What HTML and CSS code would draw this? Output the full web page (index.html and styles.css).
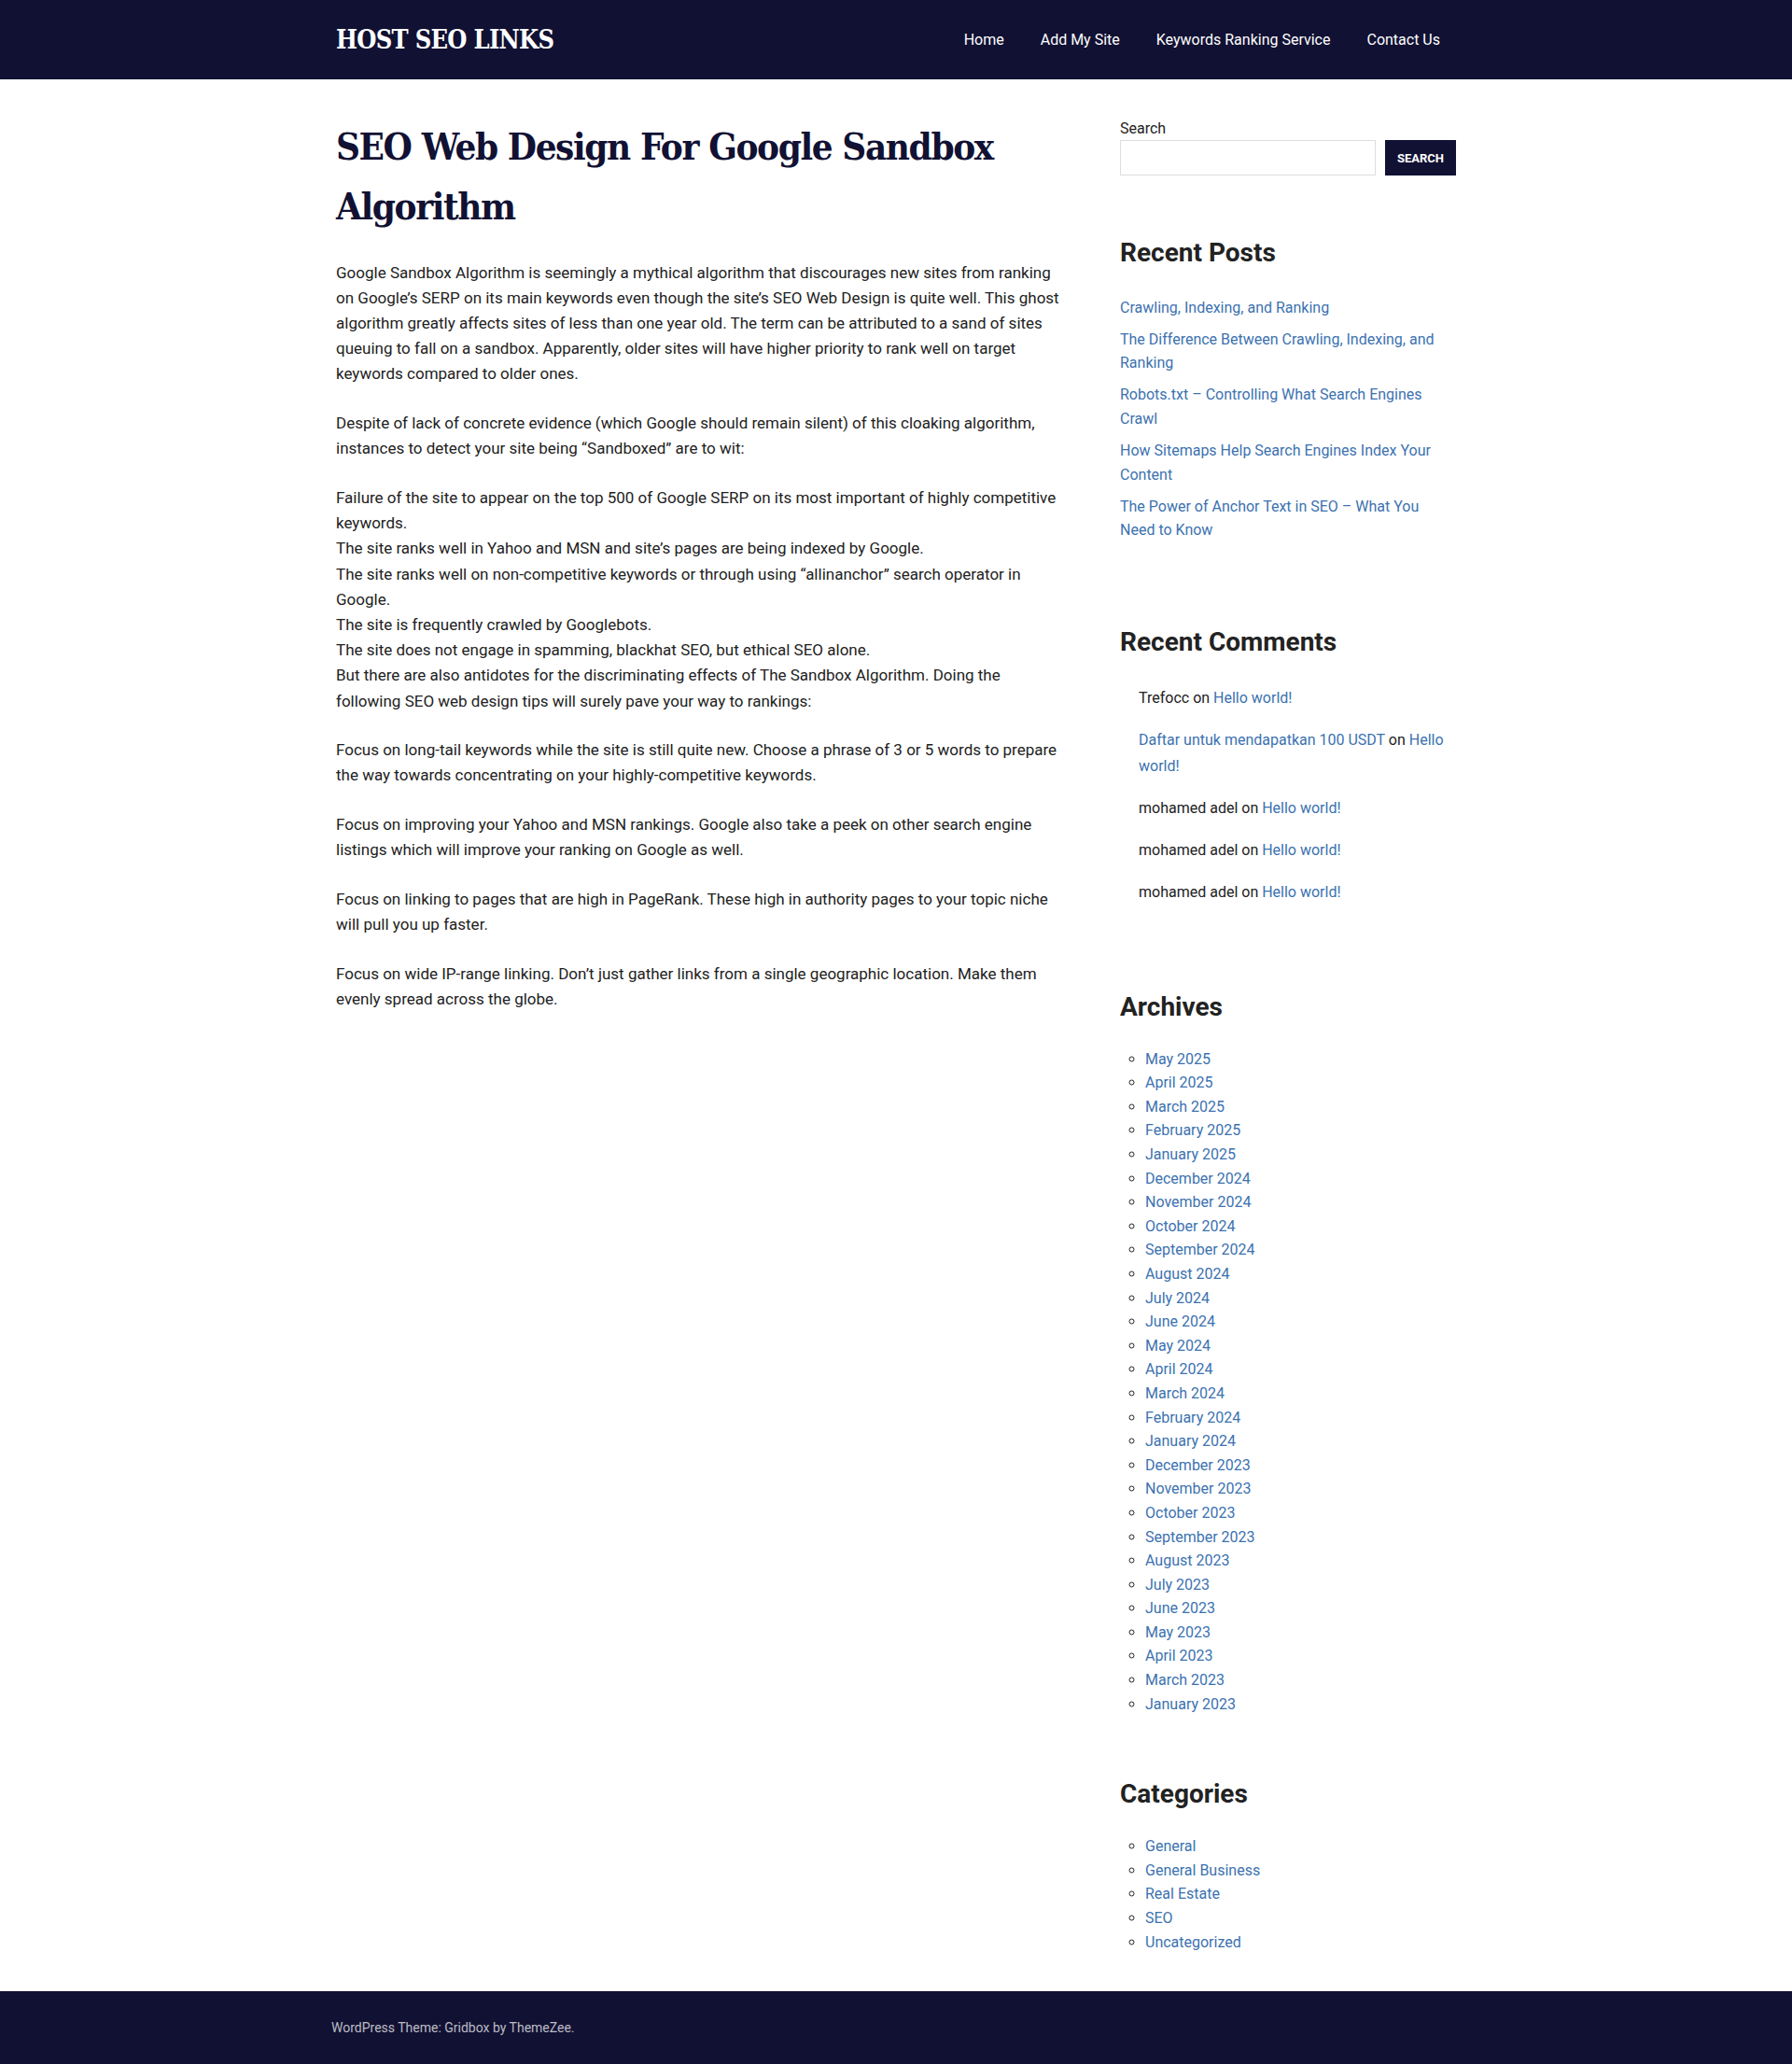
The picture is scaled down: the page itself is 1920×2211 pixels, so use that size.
FILE: index.html
```html
<!DOCTYPE html>
<html lang="en">
<head>
<meta charset="utf-8">
<title>SEO Web Design For Google Sandbox Algorithm – HOST SEO LINKS</title>
<link rel="stylesheet" href="styles.css">
</head>
<body>
<header class="site-header">
  <div class="container header-inner">
    <a class="site-title" href="#">HOST SEO LINKS</a>
    <nav class="main-nav">
      <a href="#">Home</a>
      <a href="#">Add My Site</a>
      <a href="#">Keywords Ranking Service</a>
      <a href="#">Contact Us</a>
    </nav>
  </div>
</header>

<div class="container site-body">
  <main class="content">
    <article class="post">
      <h1 class="entry-title">SEO Web Design For Google Sandbox Algorithm</h1>
      <p>Google Sandbox Algorithm is seemingly a mythical algorithm that discourages new sites from ranking on Google’s SERP on its main keywords even though the site’s SEO Web Design is quite well. This ghost algorithm greatly affects sites of less than one year old. The term can be attributed to a sand of sites queuing to fall on a sandbox. Apparently, older sites will have higher priority to rank well on target keywords compared to older ones.</p>
      <p>Despite of lack of concrete evidence (which Google should remain silent) of this cloaking algorithm, instances to detect your site being “Sandboxed” are to wit:</p>
      <p>Failure of the site to appear on the top 500 of Google SERP on its most important of highly competitive keywords.<br>The site ranks well in Yahoo and MSN and site’s pages are being indexed by Google.<br>The site ranks well on non-competitive keywords or through using “allinanchor” search operator in Google.<br>The site is frequently crawled by Googlebots.<br>The site does not engage in spamming, blackhat SEO, but ethical SEO alone.<br>But there are also antidotes for the discriminating effects of The Sandbox Algorithm. Doing the following SEO web design tips will surely pave your way to rankings:</p>
      <p>Focus on long-tail keywords while the site is still quite new. Choose a phrase of 3 or 5 words to prepare the way towards concentrating on your highly-competitive keywords.</p>
      <p>Focus on improving your Yahoo and MSN rankings. Google also take a peek on other search engine listings which will improve your ranking on Google as well.</p>
      <p>Focus on linking to pages that are high in PageRank. These high in authority pages to your topic niche will pull you up faster.</p>
      <p>Focus on wide IP-range linking. Don’t just gather links from a single geographic location. Make them evenly spread across the globe.</p>
    </article>
  </main>

  <aside class="sidebar">
    <section class="widget widget-search">
      <label class="search-label" for="s">Search</label>
      <form class="search-row">
        <input id="s" class="search-input" type="text">
        <button class="search-button" type="button">Search</button>
      </form>
    </section>

    <section class="widget">
      <h2 class="widget-title">Recent Posts</h2>
      <ul class="posts-list">
        <li><a href="#">Crawling, Indexing, and Ranking</a></li>
        <li><a href="#">The Difference Between Crawling, Indexing, and Ranking</a></li>
        <li><a href="#">Robots.txt – Controlling What Search Engines Crawl</a></li>
        <li><a href="#">How Sitemaps Help Search Engines Index Your Content</a></li>
        <li><a href="#">The Power of Anchor Text in SEO – What You Need to Know</a></li>
      </ul>
    </section>

    <section class="widget">
      <h2 class="widget-title">Recent Comments</h2>
      <ul class="comments-list">
        <li>Trefocc on <a href="#">Hello world!</a></li>
        <li><a href="#">Daftar untuk mendapatkan 100 USDT</a> on <a href="#">Hello world!</a></li>
        <li>mohamed adel on <a href="#">Hello world!</a></li>
        <li>mohamed adel on <a href="#">Hello world!</a></li>
        <li>mohamed adel on <a href="#">Hello world!</a></li>
      </ul>
    </section>

    <section class="widget">
      <h2 class="widget-title">Archives</h2>
      <ul class="circle-list">
        <li><a href="#">May 2025</a></li>
        <li><a href="#">April 2025</a></li>
        <li><a href="#">March 2025</a></li>
        <li><a href="#">February 2025</a></li>
        <li><a href="#">January 2025</a></li>
        <li><a href="#">December 2024</a></li>
        <li><a href="#">November 2024</a></li>
        <li><a href="#">October 2024</a></li>
        <li><a href="#">September 2024</a></li>
        <li><a href="#">August 2024</a></li>
        <li><a href="#">July 2024</a></li>
        <li><a href="#">June 2024</a></li>
        <li><a href="#">May 2024</a></li>
        <li><a href="#">April 2024</a></li>
        <li><a href="#">March 2024</a></li>
        <li><a href="#">February 2024</a></li>
        <li><a href="#">January 2024</a></li>
        <li><a href="#">December 2023</a></li>
        <li><a href="#">November 2023</a></li>
        <li><a href="#">October 2023</a></li>
        <li><a href="#">September 2023</a></li>
        <li><a href="#">August 2023</a></li>
        <li><a href="#">July 2023</a></li>
        <li><a href="#">June 2023</a></li>
        <li><a href="#">May 2023</a></li>
        <li><a href="#">April 2023</a></li>
        <li><a href="#">March 2023</a></li>
        <li><a href="#">January 2023</a></li>
      </ul>
    </section>

    <section class="widget widget-last">
      <h2 class="widget-title">Categories</h2>
      <ul class="circle-list">
        <li><a href="#">General</a></li>
        <li><a href="#">General Business</a></li>
        <li><a href="#">Real Estate</a></li>
        <li><a href="#">SEO</a></li>
        <li><a href="#">Uncategorized</a></li>
      </ul>
    </section>
  </aside>
</div>

<footer class="site-footer">
  <div class="footer-inner">WordPress Theme: Gridbox by ThemeZee.</div>
</footer>
</body>
</html>
```

FILE: styles.css
```css
html, body {
  margin: 0;
  padding: 0;
}

body {
  background: #ffffff;
  color: #222222;
  font-family: Roboto, "Liberation Sans", Arial, sans-serif;
  font-size: 17px;
}

a {
  color: #3c72b0;
  text-decoration: none;
}

.container {
  width: 1200px;
  margin: 0 auto;
}

/* Header */
.site-header {
  background: #111133;
  height: 85px;
}

.header-inner {
  height: 100%;
  display: flex;
  align-items: center;
  justify-content: space-between;
}

.site-title {
  color: #ffffff;
  font-family: "DejaVu Serif Condensed", "DejaVu Serif", "Liberation Serif", serif;
  font-stretch: condensed;
  font-weight: bold;
  font-size: 27px;
  letter-spacing: -0.7px;
  line-height: 1;
}

.main-nav {
  display: flex;
  align-items: center;
  gap: 39px;
  padding-right: 17px;
}

.main-nav a {
  color: #ffffff;
  font-size: 16px;
  line-height: 24px;
}

/* Body layout */
.site-body {
  display: grid;
  grid-template-columns: 780px 360px;
  column-gap: 60px;
  align-items: start;
  padding: 40px 0 40px;
}

.entry-title {
  margin: 0 0 25.5px;
  color: #111133;
  font-family: "DejaVu Serif Condensed", "DejaVu Serif", "Liberation Serif", serif;
  font-stretch: condensed;
  font-weight: bold;
  font-size: 40px;
  line-height: 64px;
  letter-spacing: -1.4px;
}

.post p {
  margin: 0 0 25.5px;
  font-size: 17px;
  line-height: 27.2px;
}

/* Sidebar */
.widget {
  margin-bottom: 64px;
}

.widget-last {
  margin-bottom: 0;
}

.widget-search {
  margin-bottom: 62.5px;
}

.search-label {
  display: block;
  font-size: 16px;
  line-height: 25px;
}

.search-row {
  display: flex;
  gap: 10px;
  margin: 0;
}

.search-input {
  flex: 1;
  height: 38px;
  box-sizing: border-box;
  border: 1px solid #dddddd;
  background: #ffffff;
  margin: 0;
  padding: 0 10px;
}

.search-button {
  width: 76px;
  height: 38px;
  margin: 0;
  border: none;
  background: #111133;
  color: #ffffff;
  font-family: Roboto, "Liberation Sans", Arial, sans-serif;
  font-weight: 700;
  font-size: 13px;
  text-transform: uppercase;
  cursor: pointer;
}

.widget-title {
  margin: 0 0 24px;
  color: #222222;
  font-size: 28px;
  font-weight: 700;
  line-height: 39px;
}

.posts-list {
  list-style: none;
  margin: 0;
  padding: 3px 0 23px;
  font-size: 16px;
  line-height: 25.6px;
}

.posts-list li {
  margin-bottom: 8.5px;
}

.posts-list li:last-child {
  margin-bottom: 0;
}

.comments-list {
  list-style: none;
  margin: 0;
  padding: 3px 0 24px 20px;
  font-size: 16px;
  line-height: 28.8px;
}

.comments-list li {
  margin-bottom: 16px;
}

.comments-list li:last-child {
  margin-bottom: 0;
}

.circle-list {
  list-style: circle;
  margin: 0;
  padding: 0 0 0 27px;
  font-size: 16px;
  line-height: 25.6px;
}

/* Footer */
.site-footer {
  background: #111133;
}

.footer-inner {
  width: 1210px;
  margin: 0 auto;
  padding: 28px 0;
  color: rgba(255, 255, 255, 0.72);
  font-size: 14px;
  line-height: 23px;
}
```
